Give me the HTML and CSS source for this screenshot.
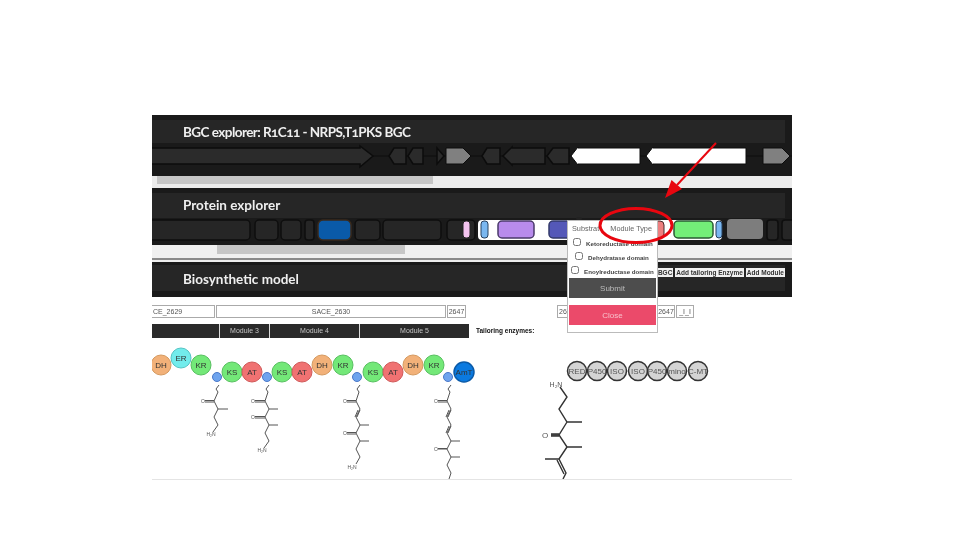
FILE: index.html
```html
<!DOCTYPE html>
<html lang="en">
<head>
<meta charset="utf-8">
<title>BGC explorer</title>
<link rel="stylesheet" href="styles.css">
</head>
<body>
<main class="shot">
  <section class="panel panel-bgc">
    <h2 class="panel-title title-tight">BGC explorer: R1C11 - NRPS,T1PKS BGC</h2>
    <svg class="track track-bgc" width="640" height="33" viewBox="0 0 640 33">
      <line x1="0" y1="13" x2="640" y2="13" stroke="#0c0c0c" stroke-width="1.2"/>
      <g fill="#2b2b2b" stroke="#0c0c0c" stroke-width="1.5">
        <path d="M-4 5H208V3L221 13 208 24V21H-4Z"/>
        <path d="M237 13l5-8H254V21H242Z"/>
        <path d="M256 13l5-8H271V21H261Z"/>
        <path d="M285 5l7 8-7 8Z"/>
        <path d="M330 13l5-8H348V21H335Z"/>
        <path d="M351 13l9-9V5H393V21H360V22Z"/>
        <path d="M395 13l6-8H417V21H401Z"/>
      </g>
      <g stroke="#0c0c0c" stroke-width="1">
        <path d="M294 5H311L319 13 311 21H294Z" fill="#808080"/>
        <path d="M611 5H630L638 13 630 21H611Z" fill="#808080"/>
        <path d="M419 13l7-9V5H488V21H426V22Z" fill="#fff"/>
        <path d="M494 13l7-9V5H594V21H501V22Z" fill="#fff"/>
      </g>
    </svg>
    <div class="scrollbar scroll-a"><span class="thumb"></span></div>
  </section>
  <section class="panel panel-protein">
    <h2 class="panel-title">Protein explorer</h2>
    <svg class="track track-protein" width="640" height="27" viewBox="0 0 640 27">
      <g fill="#262626" stroke="#0e0e0e" stroke-width="1.5">
        <rect x="-10" y="2" width="108" height="20" rx="4"/>
        <rect x="103" y="2" width="23" height="20" rx="4"/>
        <rect x="129" y="2" width="20" height="20" rx="4"/>
        <rect x="153" y="2" width="9" height="20" rx="3"/>
        <rect x="203" y="2" width="25" height="20" rx="4"/>
        <rect x="231" y="2" width="58" height="20" rx="4"/>
        <rect x="295" y="2" width="28" height="20" rx="4"/>
        <rect x="615" y="2" width="11" height="20" rx="3"/>
        <rect x="630" y="2" width="15" height="20" rx="3"/>
      </g>
      <rect x="326" y="2" width="244" height="20" rx="4" fill="#fff"/>
      <rect x="166" y="2" width="33" height="20" rx="5" fill="#0a5aa8" stroke="#3a2a1c" stroke-width="1.5"/>
      <rect x="311" y="3" width="7" height="17" rx="3" fill="#f3c3ee" stroke="#222"/>
      <rect x="329" y="3" width="7" height="17" rx="3" fill="#7ab7f0" stroke="#27405e"/>
      <rect x="346" y="3" width="36" height="17" rx="4" fill="#b88bec" stroke="#4a3a6a" stroke-width="1.5"/>
      <rect x="397" y="3" width="40" height="17" rx="4" fill="#5458b8" stroke="#333a6a" stroke-width="1.5"/>
      <rect x="480" y="3" width="32" height="17" rx="4" fill="#ee7f7f" stroke="#4a2a2a"/>
      <rect x="522" y="3" width="39" height="17" rx="4" fill="#73ee78" stroke="#2a5a33" stroke-width="1.5"/>
      <rect x="564" y="3" width="6" height="17" rx="3" fill="#7ab7f0" stroke="#27405e"/>
      <rect x="575" y="1" width="36" height="20" rx="4" fill="#7d7d7d"/>
    </svg>
    <div class="scrollbar scroll-b"><span class="thumb"></span></div>
  </section>
  <section class="panel panel-model">
    <h2 class="panel-title">Biosynthetic model</h2>
    <div class="actions">
      <button class="action">BGC</button>
      <button class="action">Add tailoring Enzyme</button>
      <button class="action">Add Module</button>
    </div>
  </section>
  <section class="canvas">
    <div class="genes">
      <span class="gene gene-2629">CE_2629</span>
      <span class="gene gene-2630">SACE_2630</span>
      <span class="gene gene-2647">2647</span>
      <span class="gene gene-26">26</span>
      <span class="gene gene-2647b">2647</span>
      <span class="gene gene-i">_I_I</span>
    </div>
    <div class="modules">
      <span class="module module-prev"></span>
      <span class="module module-3">Module 3</span>
      <span class="module module-4">Module 4</span>
      <span class="module module-5">Module 5</span>
      <strong class="tailoring">Tailoring enzymes:</strong>
    </div>
    <svg class="pathway" width="640" height="139" viewBox="0 0 640 139">
      <g font-family="Liberation Sans, sans-serif" font-size="8" text-anchor="middle" fill="#333">
        <circle cx="9" cy="25" r="10" fill="#f2b179" stroke="#d59a60"/><text x="9" y="28">DH</text>
        <circle cx="29" cy="18" r="10" fill="#72ecec" stroke="#55c4c4"/><text x="29" y="21">ER</text>
        <circle cx="49" cy="25" r="10" fill="#73e878" stroke="#58c060"/><text x="49" y="28">KR</text>
        <circle cx="65" cy="37" r="4.5" fill="#6fa4ee" stroke="#4a78c8"/>
        <circle cx="80" cy="32" r="10" fill="#73e878" stroke="#58c060"/><text x="80" y="35">KS</text>
        <circle cx="100" cy="32" r="10" fill="#f07272" stroke="#d05a5a"/><text x="100" y="35">AT</text>
        <circle cx="115" cy="37" r="4.5" fill="#6fa4ee" stroke="#4a78c8"/>
        <circle cx="130" cy="32" r="10" fill="#73e878" stroke="#58c060"/><text x="130" y="35">KS</text>
        <circle cx="150" cy="32" r="10" fill="#f07272" stroke="#d05a5a"/><text x="150" y="35">AT</text>
        <circle cx="170" cy="25" r="10" fill="#f2b179" stroke="#d59a60"/><text x="170" y="28">DH</text>
        <circle cx="191" cy="25" r="10" fill="#73e878" stroke="#58c060"/><text x="191" y="28">KR</text>
        <circle cx="205" cy="37" r="4.5" fill="#6fa4ee" stroke="#4a78c8"/>
        <circle cx="221" cy="32" r="10" fill="#73e878" stroke="#58c060"/><text x="221" y="35">KS</text>
        <circle cx="241" cy="32" r="10" fill="#f07272" stroke="#d05a5a"/><text x="241" y="35">AT</text>
        <circle cx="261" cy="25" r="10" fill="#f2b179" stroke="#d59a60"/><text x="261" y="28">DH</text>
        <circle cx="282" cy="25" r="10" fill="#73e878" stroke="#58c060"/><text x="282" y="28">KR</text>
        <circle cx="296" cy="37" r="4.5" fill="#6fa4ee" stroke="#4a78c8"/>
        <circle cx="312" cy="32" r="10" fill="#0b7ae0" stroke="#0a5aa8" stroke-width="1.5"/><text x="312" y="35">AmT</text>
        <g fill="#d4d4d4" stroke="#333" stroke-width="1.5">
          <circle cx="425" cy="31" r="9.5"/><circle cx="445" cy="31" r="9.5"/><circle cx="465" cy="31" r="9.5"/><circle cx="486" cy="31" r="9.5"/><circle cx="505" cy="31" r="9.5"/><circle cx="525" cy="31" r="9.5"/><circle cx="546" cy="31" r="9.5"/>
        </g>
        <g fill="#555">
          <text x="425" y="34">RED</text><text x="445" y="34">P450</text><text x="465" y="34">ISO</text><text x="486" y="34">ISO</text><text x="505" y="34">P450</text><text x="525" y="34">mino</text><text x="546" y="34">C-MT</text>
        </g>
      </g>
      <g fill="none" stroke="#555" stroke-width="1">
        <path d="M67 45l-3 4 2 3-4 9 4 8H76M66 69l-4 8 4 8-5 7"/>
        <path d="M53 60.5H62M53 62H62"/>
        <path d="M117 45l-3 4 2 3-3 9 4 8H126M117 69l-4 8 4 8H126M117 85l-4 8 4 8-5 7"/>
        <path d="M103 60.500H113M103 62H113M103 76.500H113M103 78H113"/>
        <path d="M208 45l-3 4 2 3-3 9 4 8-4 8 4 8H217M208 85l-4 8 4 8H217M208 101l-4 8 4 8-4 7"/>
        <path d="M195 60.500H204M195 62H204M195 92.500H204M195 94H204M206 70l-3 7M208 70l-3 7"/>
        <path d="M299 45l-3 4 2 3-3 9 4 8-4 8 4 8-4 8 4 8H308M299 101l-4 8 4 8H308M295 109H286M299 117l-4 8 4 8 -2 6"/>
        <path d="M286 60.500H295M286 62H295M286 108.500H295M297 70l-3 7M299 70l-3 7M297 86l-3 7M299 86l-3 7"/>
      </g>
      <g fill="none" stroke="#333" stroke-width="1.400">
        <path d="M408 47l7 10-8 12 8 13H430M415 82l-8 13 8 12H430M407 95H399M415 107l-8 12H393M407 119l7 14-3 6"/>
        <path d="M399 94H407M399 96H407M405 120l7 14"/>
      </g>
      <g class="chem" font-family="Liberation Sans, sans-serif" fill="#555" text-anchor="middle">
        <text x="59" y="96" font-size="5">H₂N</text>
        <text x="110" y="112" font-size="5">H₂N</text>
        <text x="200" y="129" font-size="5">H₂N</text>
        <text x="51" y="63" font-size="5">O</text>
        <text x="101" y="63" font-size="5">O</text>
        <text x="101" y="79" font-size="5">O</text>
        <text x="193" y="63" font-size="5">O</text>
        <text x="193" y="95" font-size="5">O</text>
        <text x="284" y="63" font-size="5">O</text>
        <text x="284" y="111" font-size="5">O</text>
        <text x="404" y="47" font-size="7">H₂N</text>
        <text x="393" y="98" font-size="8">O</text>
      </g>
    </svg>
    <hr class="rule">
  </section>
  <aside class="popup">
    <span class="nub"></span>
    <div class="tabs"><span class="tab">Substrat</span><span class="tab">Module Type</span></div>
    <label class="option opt-1"><input type="checkbox"><span>Ketoreductase domain</span></label>
    <label class="option opt-2"><input type="checkbox"><span>Dehydratase domain</span></label>
    <label class="option opt-3"><input type="checkbox"><span>Enoylreductase domain</span></label>
    <button class="popup-btn submit">Submit</button>
    <button class="popup-btn close">Close</button>
  </aside>
  <svg class="callout" width="150" height="110" viewBox="0 0 150 110">
    <ellipse cx="34" cy="87.500" rx="36" ry="17" fill="none" stroke="#e8060f" stroke-width="3"/>
    <path d="M114 5L75 47" stroke="#e8060f" stroke-width="2" fill="none"/>
    <path d="M63 60L69.500 42 80 51Z" fill="#e8060f"/>
  </svg>
</main>
</body>
</html>
```
FILE: styles.css
```css
* { box-sizing: border-box; }
html, body { margin: 0; padding: 0; background: #fff; }
body { width: 960px; height: 540px; overflow: hidden; font-family: "Liberation Sans", Arial, sans-serif; }
.shot { position: relative; width: 640px; height: 365px; margin: 115px 0 0 152px; filter: blur(0.45px); }
.panel { position: relative; width: 640px; background: #262626; overflow: hidden; }
.panel-bgc { height: 73px; box-shadow: inset -7px 5px 0 #1a1a1a; }
.panel-protein { height: 74px; box-shadow: inset -7px 5px 0 #1a1a1a; }
.panel-model { height: 35px; box-shadow: inset -7px 3px 0 #1a1a1a, inset 0 -6px 0 #1a1a1a; display: flex; justify-content: space-between; align-items: flex-start; }
.panel-title { margin: 0; padding: 9px 0 0 31px; font: 700 13.500px/16px Lato, "Noto Sans", sans-serif; font-variant-numeric: oldstyle-nums; color: #efefef; }
.title-tight { letter-spacing: -0.55px; }
.track { display: block; background: #1a1a1a; }
.track-bgc { margin-top: 3px; }
.track-protein { margin-top: 5px; }
.scrollbar { display: flex; align-items: flex-start; }
.scroll-a { height: 12px; background: #ececec; }
.scroll-b { height: 17px; background: linear-gradient(#f0f0f0 0 13px, #8a8a8a 13px 15px, #eee 15px); }
.thumb { display: block; background: #c6c6c6; }
.scroll-a .thumb { width: 276px; height: 8px; margin-left: 5px; }
.scroll-b .thumb { width: 188px; height: 9px; margin-left: 65px; }
.actions { display: flex; gap: 2px; padding: 6px 7px 0 0; }
.action { padding: 0 1px; height: 9px; border: 0; background: #f0f0f0; color: #333; font: 700 6.500px/9px "Liberation Sans", sans-serif; }
.canvas { position: relative; height: 183px; padding-top: 8px; background: #fff; overflow: hidden; }
.genes { position: relative; height: 13px; }
.gene { position: absolute; top: 0; height: 13px; border: 1px solid #aaa; background: #fff; color: #555; font-size: 7px; line-height: 11px; text-align: center; }
.gene-2629 { left: -2px; width: 65px; text-align: left; padding-left: 2px; }
.gene-2630 { left: 64px; width: 230px; }
.gene-2647 { left: 295px; width: 19px; }
.gene-26 { left: 405px; width: 12px; }
.gene-2647b { left: 505px; width: 18px; }
.gene-i { left: 524px; width: 18px; }
.modules { display: flex; height: 14px; margin-top: 6px; align-items: stretch; }
.module { background: #2a2a2a; color: #c4c4c4; font-size: 7px; line-height: 14px; text-align: center; border-left: 1px solid #ddd; }
.module-prev { width: 67px; border-left: 0; }
.module-3 { width: 50px; }
.module-4 { width: 90px; }
.module-5 { width: 110px; }
.tailoring { margin-left: 7px; font-size: 6.500px; line-height: 14px; color: #111; }
.pathway { display: block; margin-top: 2px; }
.rule { position: absolute; left: 0; right: 0; top: 182px; margin: 0; border: 0; border-top: 1px solid #e4e4e4; }
.popup { position: absolute; left: 415px; top: 105px; width: 91px; height: 113px; background: #fff; border: 1px solid #bbb; padding: 1px; display: flex; flex-direction: column; z-index: 2; }
.nub { position: absolute; left: 8px; top: -4px; width: 6px; height: 3px; background: #222; border-radius: 2px; }
.tabs { display: flex; justify-content: space-between; height: 12px; padding: 0 4px 0 3px; color: #666; font-size: 7.300px; line-height: 14px; white-space: nowrap; overflow: hidden; flex: none; }
.option { display: flex; align-items: center; gap: 3px; height: 14px; flex: none; font-size: 6.200px; font-weight: 700; color: #444; white-space: nowrap; overflow: hidden; }
.opt-1 { padding-left: 4px; margin-top: 2px; }
.opt-2 { padding-left: 6px; }
.opt-3 { padding-left: 2px; }
.option input { width: 8px; height: 8px; margin: 0 2px 3px 0; flex: none; }
.popup-btn { display: block; width: 87px; height: 20px; flex: none; border: 0; font-size: 8px; }
.submit { background: #4d4d4d; color: #bbb; }
.close { margin-top: 7px; background: #eb4a6a; color: #f7c0cb; }
.callout { position: absolute; left: 450px; top: 23px; z-index: 3; overflow: visible; pointer-events: none; }
```
